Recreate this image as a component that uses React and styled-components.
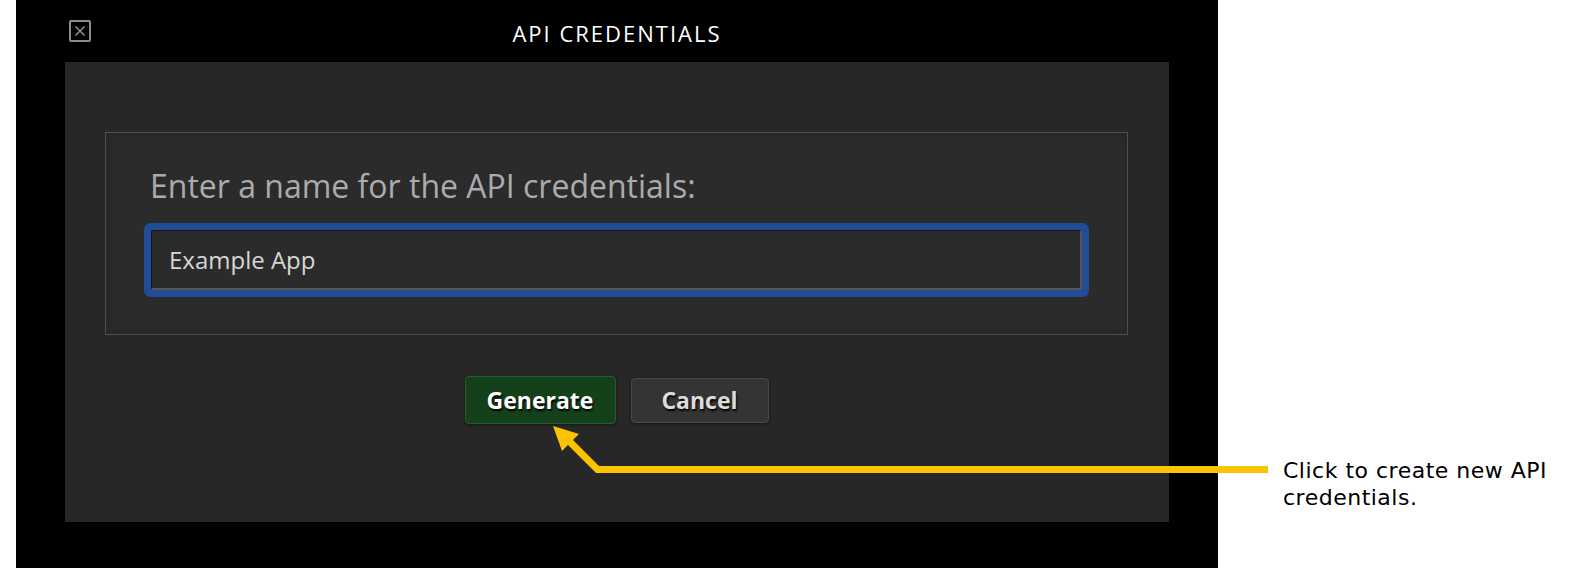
import React from "react";
import styled, { createGlobalStyle } from "styled-components";

const GlobalStyle = createGlobalStyle`
  html, body {
    margin: 0;
    padding: 0;
    background: #fff;
  }
  * {
    box-sizing: border-box;
  }
`

const Page = styled.div`
  position: relative;
  display: flex;
  width: 1580px;
  height: 568px;
  padding-left: 16px;
  background: #fff;
  overflow: hidden;
`

const Dialog = styled.div`
  display: flex;
  flex-direction: column;
  width: 1202px;
  height: 100%;
  background: #000;
`

const Header = styled.div`
  display: grid;
  grid-template-columns: 1fr auto 1fr;
  align-items: center;
  height: 62px;
`

const CloseButton = styled.button`
  justify-self: start;
  display: flex;
  width: 22px;
  height: 22px;
  margin-left: 53px;
  padding: 0;
  border: none;
  background: transparent;
  cursor: pointer;
`

const Title = styled.h1`
  margin: 0;
  padding-top: 3px;
  color: #fff;
  font-family: "Open Sans", sans-serif;
  font-size: 22px;
  font-weight: 400;
  letter-spacing: 2px;
`

const Body = styled.div`
  display: flex;
  flex-direction: column;
  height: 460px;
  margin: 0 49px;
  padding: 70px 41px 0 40px;
  background: #272727;
`

const FieldBox = styled.div`
  display: flex;
  flex-direction: column;
  height: 203px;
  padding: 34px 45px 0 44px;
  border: 1px solid #4e4e4e;
  background: #2b2b2b;
  box-shadow: inset 0 0 12px rgba(0, 0, 0, 0.15);
`

const Label = styled.label`
  color: #ababab;
  font-family: "Open Sans", sans-serif;
  font-size: 32px;
  line-height: 38px;
`

const NameInput = styled.input`
  width: calc(100% - 1px);
  height: 60px;
  margin: 25px 0 0 1px;
  padding: 0 0 0 17px;
  border-style: solid;
  border-width: 1px 2px 2px 1px;
  border-color: #161616 #555 #555 #161616;
  border-radius: 2px;
  outline: none;
  background: #2b2b2b;
  box-shadow: 0 0 0 7px #214d98;
  color: #d6d6d6;
  font-family: "Open Sans", sans-serif;
  font-size: 24px;
`

const ButtonRow = styled.div`
  display: flex;
  justify-content: center;
  align-items: center;
  gap: 15px;
  margin-top: 41px;
`

const Button = styled.button`
  width: ${(props) => (props.primary ? "151px" : "138px")};
  height: ${(props) => (props.primary ? "48px" : "45px")};
  padding: 0;
  border: 1px solid ${(props) => (props.primary ? "#2a5a2c" : "#4a4a4a")};
  border-radius: 4px;
  background: ${(props) => (props.primary ? "#14411a" : "#343434")};
  box-shadow: 0 1px 3px rgba(0, 0, 0, 0.5);
  color: ${(props) => (props.primary ? "#fff" : "#dcdcdc")};
  font-family: "Open Sans", sans-serif;
  font-size: 23px;
  font-weight: 700;
  text-shadow: 1px 2px 2px #000;
  cursor: pointer;
`

const Note = styled.div`
  padding: 457px 0 0 65px;
  color: #000;
  font-family: "DejaVu Sans", Verdana, sans-serif;
  font-size: 22px;
  line-height: 27px;
  letter-spacing: 0.5px;
`

const Callout = styled.svg`
  position: absolute;
  left: 0;
  top: 0;
  pointer-events: none;
`

function CloseIcon() {
  return (
    <svg width="22" height="22" viewBox="0 0 22 22">
      <rect x="1" y="1" width="20" height="20" rx="1" fill="none" stroke="#8c8c8c" strokeWidth="2" />
      <path d="M6.5 6.5 L15.5 15.5 M15.5 6.5 L6.5 15.5" stroke="#8c8c8c" strokeWidth="1.6" />
    </svg>
  )
}

function App() {
  return (
    <Page>
      <GlobalStyle />
      <Dialog>
        <Header>
          <CloseButton aria-label="Close">
            <CloseIcon />
          </CloseButton>
          <Title>API CREDENTIALS</Title>
        </Header>
        <Body>
          <FieldBox>
            <Label htmlFor="cred-name">Enter a name for the API credentials:</Label>
            <NameInput id="cred-name" defaultValue="Example App" />
          </FieldBox>
          <ButtonRow>
            <Button primary>Generate</Button>
            <Button>Cancel</Button>
          </ButtonRow>
        </Body>
      </Dialog>
      <Note>
        Click to create new API
        <br />
        credentials.
      </Note>
      {/* arrow from the note back to the Generate button */}
      <Callout width="1580" height="568" viewBox="0 0 1580 568">
        <path d="M568 440 L597.5 469.5 L1268 469.5" fill="none" stroke="#fcc400" strokeWidth="7" strokeLinejoin="miter" />
        <polygon points="553,426 562,451 579,434" fill="#fcc400" />
      </Callout>
    </Page>
  )
}

export default App;
